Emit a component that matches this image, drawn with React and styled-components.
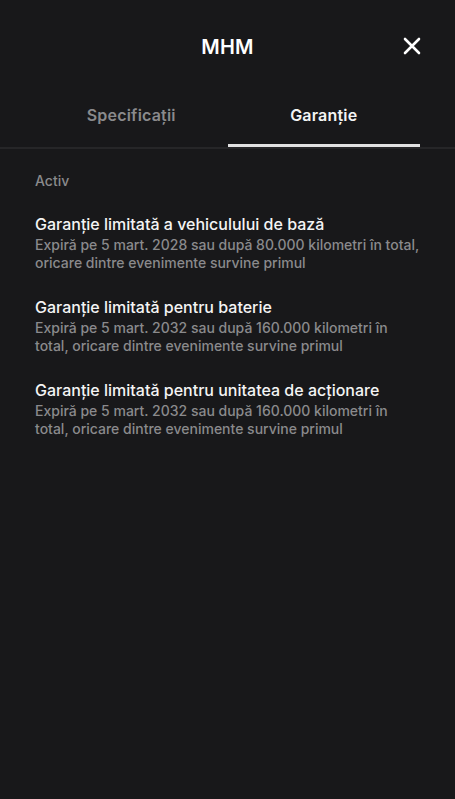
import React from "react";
import styled, { createGlobalStyle } from "styled-components";

const warranties = [
  {
    title: "Garanție limitată a vehiculului de bază",
    text: "Expiră pe 5 mart. 2028 sau după 80.000 kilometri în total, oricare dintre evenimente survine primul",
  },
  {
    title: "Garanție limitată pentru baterie",
    text: "Expiră pe 5 mart. 2032 sau după 160.000 kilometri în total, oricare dintre evenimente survine primul",
  },
  {
    title: "Garanție limitată pentru unitatea de acționare",
    text: "Expiră pe 5 mart. 2032 sau după 160.000 kilometri în total, oricare dintre evenimente survine primul",
  },
];

function App() {
  return (
    <>
      <GlobalStyle />
      <Screen>
        <Header>
          <Title>MHM</Title>
          <CloseButton aria-label="Închide">
            <svg width="18" height="18" viewBox="0 0 18 18">
              <path
                d="M2 2 L16 16 M16 2 L2 16"
                stroke="#fff"
                strokeWidth="2.6"
                strokeLinecap="round"
              />
            </svg>
          </CloseButton>
        </Header>
        <Tabs>
          <Tab>Specificații</Tab>
          <Tab active>Garanție</Tab>
        </Tabs>
        <Content>
          <SectionLabel>Activ</SectionLabel>
          {warranties.map((w) => (
            <Item key={w.title}>
              <ItemTitle>{w.title}</ItemTitle>
              <ItemText>{w.text}</ItemText>
            </Item>
          ))}
        </Content>
      </Screen>
    </>
  );
}

export default App;

const GlobalStyle = createGlobalStyle`
  html, body {
    margin: 0;
    padding: 0;
    background: #18181a;
  }
  body {
    font-family: Inter, "Noto Sans", sans-serif;
    -webkit-font-smoothing: antialiased;
  }
`;

const Screen = styled.div`
  width: 455px;
  min-height: 799px;
  background: #18181a;
  color: #fff;
`;

const Header = styled.div`
  position: relative;
  height: 94px;
  display: flex;
  align-items: center;
  justify-content: center;
`;

const Title = styled.h1`
  margin: 0;
  font-size: 20px;
  font-weight: 600;
  letter-spacing: 0.2px;
`;

const CloseButton = styled.button`
  position: absolute;
  right: 34px;
  top: 37px;
  width: 18px;
  height: 18px;
  padding: 0;
  border: 0;
  background: none;
  display: flex;
`;

const Tabs = styled.div`
  display: flex;
  padding: 0 35px;
  border-bottom: 2px solid #262628;
`;

const Tab = styled.div`
  flex: 1;
  height: 53px;
  padding-bottom: 11px;
  box-sizing: border-box;
  display: flex;
  align-items: center;
  justify-content: center;
  font-size: 16px;
  font-weight: 600;
  letter-spacing: 0.2px;
  color: ${(p) => (p.active ? "#f4f4f4" : "#8a8a8c")};
  box-shadow: ${(p) => (p.active ? "inset 0 -3px 0 #e2e2e2" : "none")};
`;

const Content = styled.div`
  padding: 23px 35px 0;
`;

const SectionLabel = styled.div`
  font-size: 14px;
  font-weight: 500;
  line-height: 17px;
  color: #8a8a8c;
  margin-bottom: 25px;
`;

const Item = styled.div`
  margin-bottom: 25px;
`;

const ItemTitle = styled.div`
  font-size: 16px;
  font-weight: 500;
  line-height: 20px;
  color: #f4f4f4;
  margin-bottom: 2px;
`;

const ItemText = styled.div`
  font-size: 14px;
  font-weight: 500;
  line-height: 18px;
  color: #8a8a8c;
`;
